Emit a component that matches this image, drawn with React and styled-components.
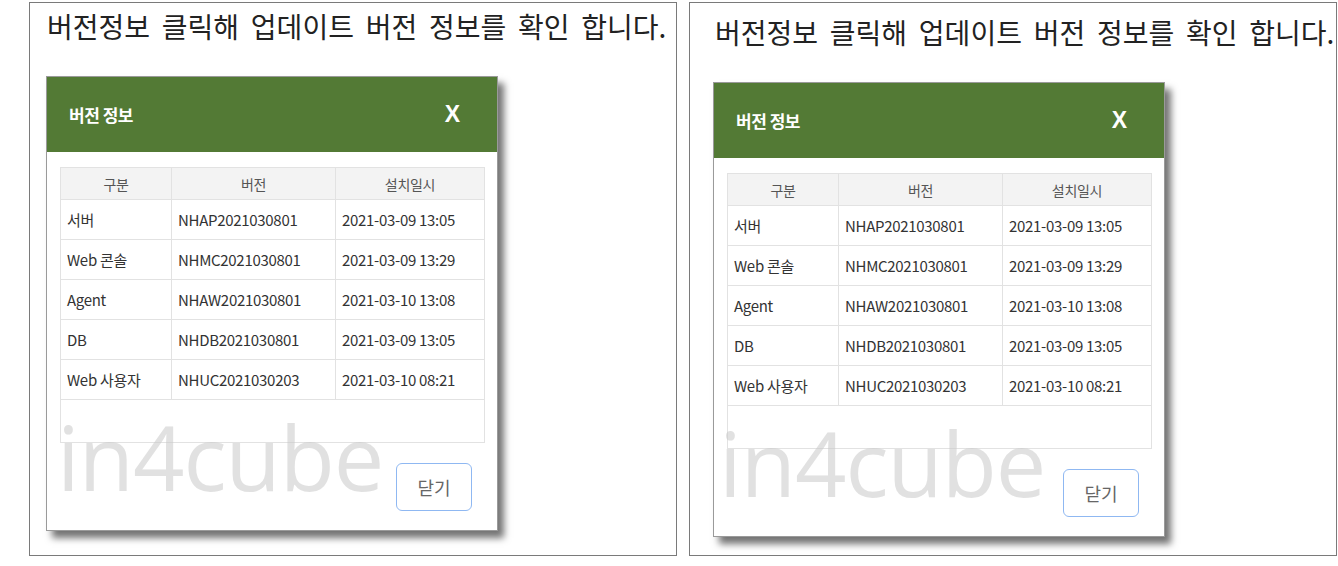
import React from 'react';
import styled, { createGlobalStyle } from 'styled-components';

const GlobalStyle = createGlobalStyle`
  body {
    margin: 0;
    background: #ffffff;
    font-family: "Noto Sans CJK KR", "Noto Sans", sans-serif;
  }
`;

const Page = styled.div`
  display: flex;
  gap: 12px;
  padding: 2px 0 0 29px;
`;

const Panel = styled.section`
  box-sizing: border-box;
  width: 648px;
  height: 554px;
  border: 1px solid #7a7a7a;
  padding: ${(p) => p.$top}px 0 0 ${(p) => p.$inset}px;
  display: flex;
  flex-direction: column;
  align-items: flex-start;
`;

const Lead = styled.p`
  margin: 0 0 0 ${(p) => p.$shift}px;
  font-size: 28px;
  line-height: 31px;
  color: #222;
  word-spacing: 5.5px;
  white-space: nowrap;
`;

const Dialog = styled.div`
  position: relative;
  margin-top: 34px;
  width: 450px;
  height: 453px;
  background: #fff;
  border: 1px solid #9a9a9a;
  box-shadow: 6px 7px 7px rgba(0, 0, 0, 0.55);
  display: flex;
  flex-direction: column;
  overflow: hidden;
`;

const Header = styled.header`
  height: 75px;
  background: #537a35;
  display: flex;
  align-items: center;
  justify-content: space-between;
  padding: 0 37px 0 22px;
  color: #fff;
`;

const Title = styled.h2`
  margin: 0;
  font-size: 17px;
  font-weight: 700;
  letter-spacing: -0.5px;
`;

const Close = styled.button`
  border: none;
  background: none;
  color: #fff;
  font-family: "Liberation Sans", Arial, sans-serif;
  font-weight: 700;
  font-size: 23px;
  padding: 0;
  cursor: pointer;
`;

const Body = styled.div`
  padding: 15px 13px 0 13px;
  display: flex;
  flex-direction: column;
  flex: 1;
`;

const Table = styled.table`
  width: 424px;
  border-collapse: collapse;
  table-layout: fixed;
  font-size: 15px;
  color: #333;
  td, th {
    border: 1px solid #e2e2e2;
    padding: 0 0 0 6px;
    text-align: left;
    white-space: nowrap;
    letter-spacing: -0.3px;
  }
  th {
    height: 31px;
    background: #f3f3f3;
    font-weight: 400;
    color: #555;
    text-align: center;
    padding: 0;
    font-size: 14px;
  }
  td {
    height: 39px;
  }
  tr.blank td {
    height: 42px;
  }
`;

const Footer = styled.div`
  display: flex;
  justify-content: flex-end;
  padding: 20px 12px 0 0;
`;

const CloseButton = styled.button`
  width: 76px;
  height: 48px;
  border: 1.5px solid #8fb8f2;
  border-radius: 6px;
  background: #fff;
  color: #666;
  font-family: "Noto Sans CJK KR", sans-serif;
  font-size: 18px;
  cursor: pointer;
`;

const Watermark = styled.span`
  position: absolute;
  left: ${(p) => p.$left}px;
  top: 334px;
  font-family: "Open Sans", sans-serif;
  font-size: 90px;
  line-height: 1;
  letter-spacing: -1px;
  color: rgba(200, 200, 200, 0.55);
  pointer-events: none;
`;

const rows = [
  ['서버', 'NHAP2021030801', '2021-03-09 13:05'],
  ['Web 콘솔', 'NHMC2021030801', '2021-03-09 13:29'],
  ['Agent', 'NHAW2021030801', '2021-03-10 13:08'],
  ['DB', 'NHDB2021030801', '2021-03-09 13:05'],
  ['Web 사용자', 'NHUC2021030203', '2021-03-10 08:21'],
];

function VersionDialog({ markLeft }) {
  return (
    <Dialog>
      <Header>
        <Title>버전 정보</Title>
        <Close>X</Close>
      </Header>
      <Body>
        <Table>
          <colgroup>
            <col style={{ width: 111 }} />
            <col style={{ width: 164 }} />
            <col style={{ width: 149 }} />
          </colgroup>
          <thead>
            <tr>
              <th>구분</th>
              <th>버전</th>
              <th>설치일시</th>
            </tr>
          </thead>
          <tbody>
            {rows.map((r) => (
              <tr key={r[1] + r[0]}>
                <td>{r[0]}</td>
                <td>{r[1]}</td>
                <td>{r[2]}</td>
              </tr>
            ))}
            <tr className="blank">
              <td colSpan={3}></td>
            </tr>
          </tbody>
        </Table>
        <Footer>
          <CloseButton>닫기</CloseButton>
        </Footer>
      </Body>
      <Watermark $left={markLeft}>in4cube</Watermark>
    </Dialog>
  );
}

export default function App() {
  return (
    <>
      <GlobalStyle />
      <Page>
        <Panel $top={8} $inset={16}>
          <Lead $shift={1}>버전정보 클릭해 업데이트 버전 정보를 확인 합니다.</Lead>
          <VersionDialog markLeft={10} />
        </Panel>
        <Panel $top={14} $inset={23}>
          <Lead $shift={2}>버전정보 클릭해 업데이트 버전 정보를 확인 합니다.</Lead>
          <VersionDialog markLeft={5} />
        </Panel>
      </Page>
    </>
  );
}
